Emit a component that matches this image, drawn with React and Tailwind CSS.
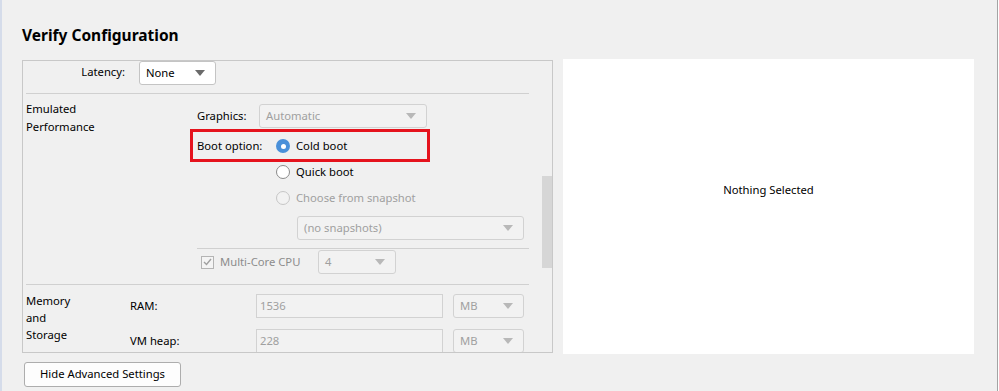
import React from 'react';

const font = { fontFamily: '"Noto Sans", "Liberation Sans", sans-serif' };

const Caret = ({ disabled }) => (
  <svg width="10" height="6" viewBox="0 0 10 6" className="shrink-0">
    <polygon points="0,0 10,0 5,6" fill={disabled ? '#b8b8b8' : '#6a6a6a'} />
  </svg>
);

const Select = ({ value, width, disabled }) => (
  <div
    className={`flex h-[24px] items-center justify-between rounded-[3px] border pl-[6px] pr-[10px] ${
      disabled ? 'border-[#d2d2d2] bg-[#f2f2f2] text-[#a0a0a0]' : 'border-[#c4c4c4] bg-white text-black'
    }`}
    style={{ width }}
  >
    <span>{value}</span>
    <Caret disabled={disabled} />
  </div>
);

const Input = ({ value, width }) => (
  <div
    className="flex h-[24px] items-center border border-[#d2d2d2] bg-[#f2f2f2] pl-[3px] text-[#a0a0a0]"
    style={{ width }}
  >
    {value}
  </div>
);

const Radio = ({ label, checked, disabled }) => (
  <div className="flex h-[26px] items-center">
    {checked ? (
      <span className="flex h-[14px] w-[14px] items-center justify-center rounded-full bg-[#4a90d9]">
        <span className="h-[5px] w-[5px] rounded-full bg-white" />
      </span>
    ) : (
      <span
        className={`h-[14px] w-[14px] rounded-full border ${
          disabled ? 'border-[#c6c6c6] bg-[#f2f2f2]' : 'border-[#8a8a8a] bg-white'
        }`}
      />
    )}
    <span className={`ml-[6px] ${disabled ? 'text-[#a0a0a0]' : 'text-black'}`}>{label}</span>
  </div>
);

export default function App() {
  return (
    <div
      className="flex h-[391px] w-[998px] flex-col border-l-2 border-r border-l-[#d5dcea] border-r-[#a4a4a4] bg-[#f0f0f0] pl-[20px] text-[11.25px] text-black"
      style={font}
    >
      <div className="mt-[24px] h-[22px] text-[15.5px] font-bold leading-[22px]">Verify Configuration</div>

      <div className="mt-[13px] flex items-center gap-[10px]">
        {/* settings panel */}
        <div className="flex h-[293px] w-[531px] overflow-hidden border border-[#c8c8c8]">
          <div className="w-[519px] pl-[3px] pr-[13px]">
            {/* latency */}
            <div className="flex h-[33px] border-b border-[#d0d0d0]">
              <div className="flex h-[23px] w-[99px] items-center justify-end">Latency:</div>
              <div className="ml-[14px]">
                <div className="h-[23px]">
                  <Select value="None" width={77} />
                </div>
              </div>
            </div>

            {/* emulated performance */}
            <div className="flex h-[191px] border-b border-[#d0d0d0]">
              <div className="w-[171px] pt-[6px] leading-[18px]">
                Emulated
                <br />
                Performance
              </div>
              <div className="flex-1 pt-[10px]">
                <div className="flex items-center">
                  <span className="w-[62px]">Graphics:</span>
                  <Select value="Automatic" width={168} disabled />
                </div>
                <div className="relative mt-[5px] flex">
                  <div className="absolute left-[-7px] top-[-4px] h-[33px] w-[240px] border-[3px] border-[#e5131d]" />
                  <span className="flex h-[26px] w-[79px] items-center">Boot option:</span>
                  <div>
                    <Radio label="Cold boot" checked />
                    <Radio label="Quick boot" />
                    <Radio label="Choose from snapshot" disabled />
                  </div>
                </div>
                <div className="mt-[5px] border-b border-[#d0d0d0] pb-[8px] pl-[100px]">
                  <Select value="(no snapshots)" width={227} disabled />
                </div>
                <div className="flex items-center pt-[1px]">
                  <span className="ml-[4px] flex h-[13px] w-[13px] items-center justify-center border border-[#b4b4b4] bg-[#f4f4f4]">
                    <svg width="9" height="8" viewBox="0 0 9 8">
                      <polyline points="1,4 3.5,6.5 8,1" fill="none" stroke="#a0a0a0" strokeWidth="1.4" />
                    </svg>
                  </span>
                  <span className="ml-[6px] w-[98px] text-[#8c8c8c]">Multi-Core CPU</span>
                  <Select value="4" width={78} disabled />
                </div>
              </div>
            </div>

            {/* memory and storage */}
            <div className="flex">
              <div className="w-[104px] pt-[7px] leading-[17px]">
                Memory
                <br />
                and
                <br />
                Storage
              </div>
              <div className="pt-[9px]">
                <div className="flex items-center">
                  <span className="w-[126px]">RAM:</span>
                  <Input value="1536" width={187} />
                  <div className="ml-[10px]">
                    <Select value="MB" width={71} disabled />
                  </div>
                </div>
                <div className="mt-[11px] flex items-center">
                  <span className="w-[126px]">VM heap:</span>
                  <Input value="228" width={187} />
                  <div className="ml-[10px]">
                    <Select value="MB" width={71} disabled />
                  </div>
                </div>
              </div>
            </div>
          </div>
          {/* scrollbar */}
          <div className="w-[10px]">
            <div className="mt-[115px] h-[92px] bg-[#d6d6d6]" />
          </div>
        </div>

        {/* detail panel */}
        <div className="flex h-[295px] w-[411px] justify-center bg-white pt-[122px] leading-[18px]">
          Nothing Selected
        </div>
      </div>

      <div className="ml-[2px] mt-[8px] flex h-[25px] w-[157px] items-center justify-center rounded-[3px] border border-[#adadad] bg-[#fdfdfd]">
        Hide Advanced Settings
      </div>
    </div>
  );
}
